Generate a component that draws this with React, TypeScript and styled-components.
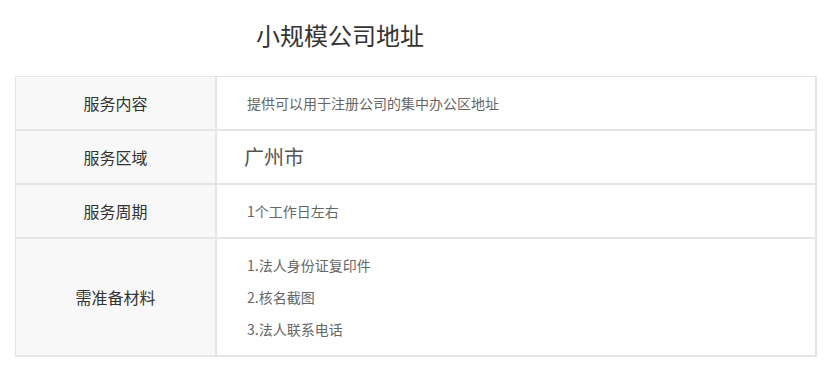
import { Fragment } from 'react';
import styled, { createGlobalStyle } from 'styled-components';

const GlobalStyle = createGlobalStyle`
  html, body {
    margin: 0;
    padding: 0;
    background: #fff;
  }
  body {
    font-family: "Noto Sans CJK SC", "Noto Sans", sans-serif;
  }
`;

const Page = styled.div`
  width: 832px;
  padding: 23px 15px 0;
  box-sizing: border-box;
`;

const Title = styled.h2`
  margin: 0 0 29px 241px;
  font-size: 24px;
  line-height: 24px;
  font-weight: 400;
  color: #333;
`;

const Table = styled.div`
  display: grid;
  grid-template-columns: 201px 1fr;
  border-top: 1px solid #e5e5e5;
  border-left: 1px solid #e5e5e5;
`;

const LabelCell = styled.div<{ $height: number }>`
  height: ${p => p.$height}px;
  display: flex;
  align-items: center;
  justify-content: center;
  background: #f8f8f8;
  border-right: 2px solid #e5e5e5;
  border-bottom: 2px solid #e5e5e5;
  font-size: 16px;
  color: #333;
`;

const ValueCell = styled.div<{ $height: number; $indent: number }>`
  height: ${p => p.$height}px;
  display: flex;
  flex-direction: column;
  justify-content: center;
  padding-left: ${p => p.$indent}px;
  background: #fff;
  border-right: 2px solid #e5e5e5;
  border-bottom: 2px solid #e5e5e5;
`;

const Text = styled.span<{ $size?: number }>`
  font-size: ${p => p.$size ?? 14}px;
  line-height: 32px;
  color: ${p => (p.$size ? '#555' : '#666')};
`;

type Row = { label: string; values: string[]; height: number; size?: number; indent?: number };

const rows: Row[] = [
  { label: '服务内容', values: ['提供可以用于注册公司的集中办公区地址'], height: 52 },
  { label: '服务区域', values: ['广州市'], height: 52, size: 20, indent: 27 },
  { label: '服务周期', values: ['1个工作日左右'], height: 52 },
  {
    label: '需准备材料',
    values: ['1.法人身份证复印件', '2.核名截图', '3.法人联系电话'],
    height: 116,
  },
];

export default function App() {
  return (
    <>
      <GlobalStyle />
      <Page>
        <Title>小规模公司地址</Title>
        <Table>
          {rows.map(row => (
            <Fragment key={row.label}>
              <LabelCell $height={row.height}>{row.label}</LabelCell>
              <ValueCell $height={row.height} $indent={row.indent ?? 30}>
                {row.values.map(v => (
                  <Text key={v} $size={row.size}>
                    {v}
                  </Text>
                ))}
              </ValueCell>
            </Fragment>
          ))}
        </Table>
      </Page>
    </>
  );
}
